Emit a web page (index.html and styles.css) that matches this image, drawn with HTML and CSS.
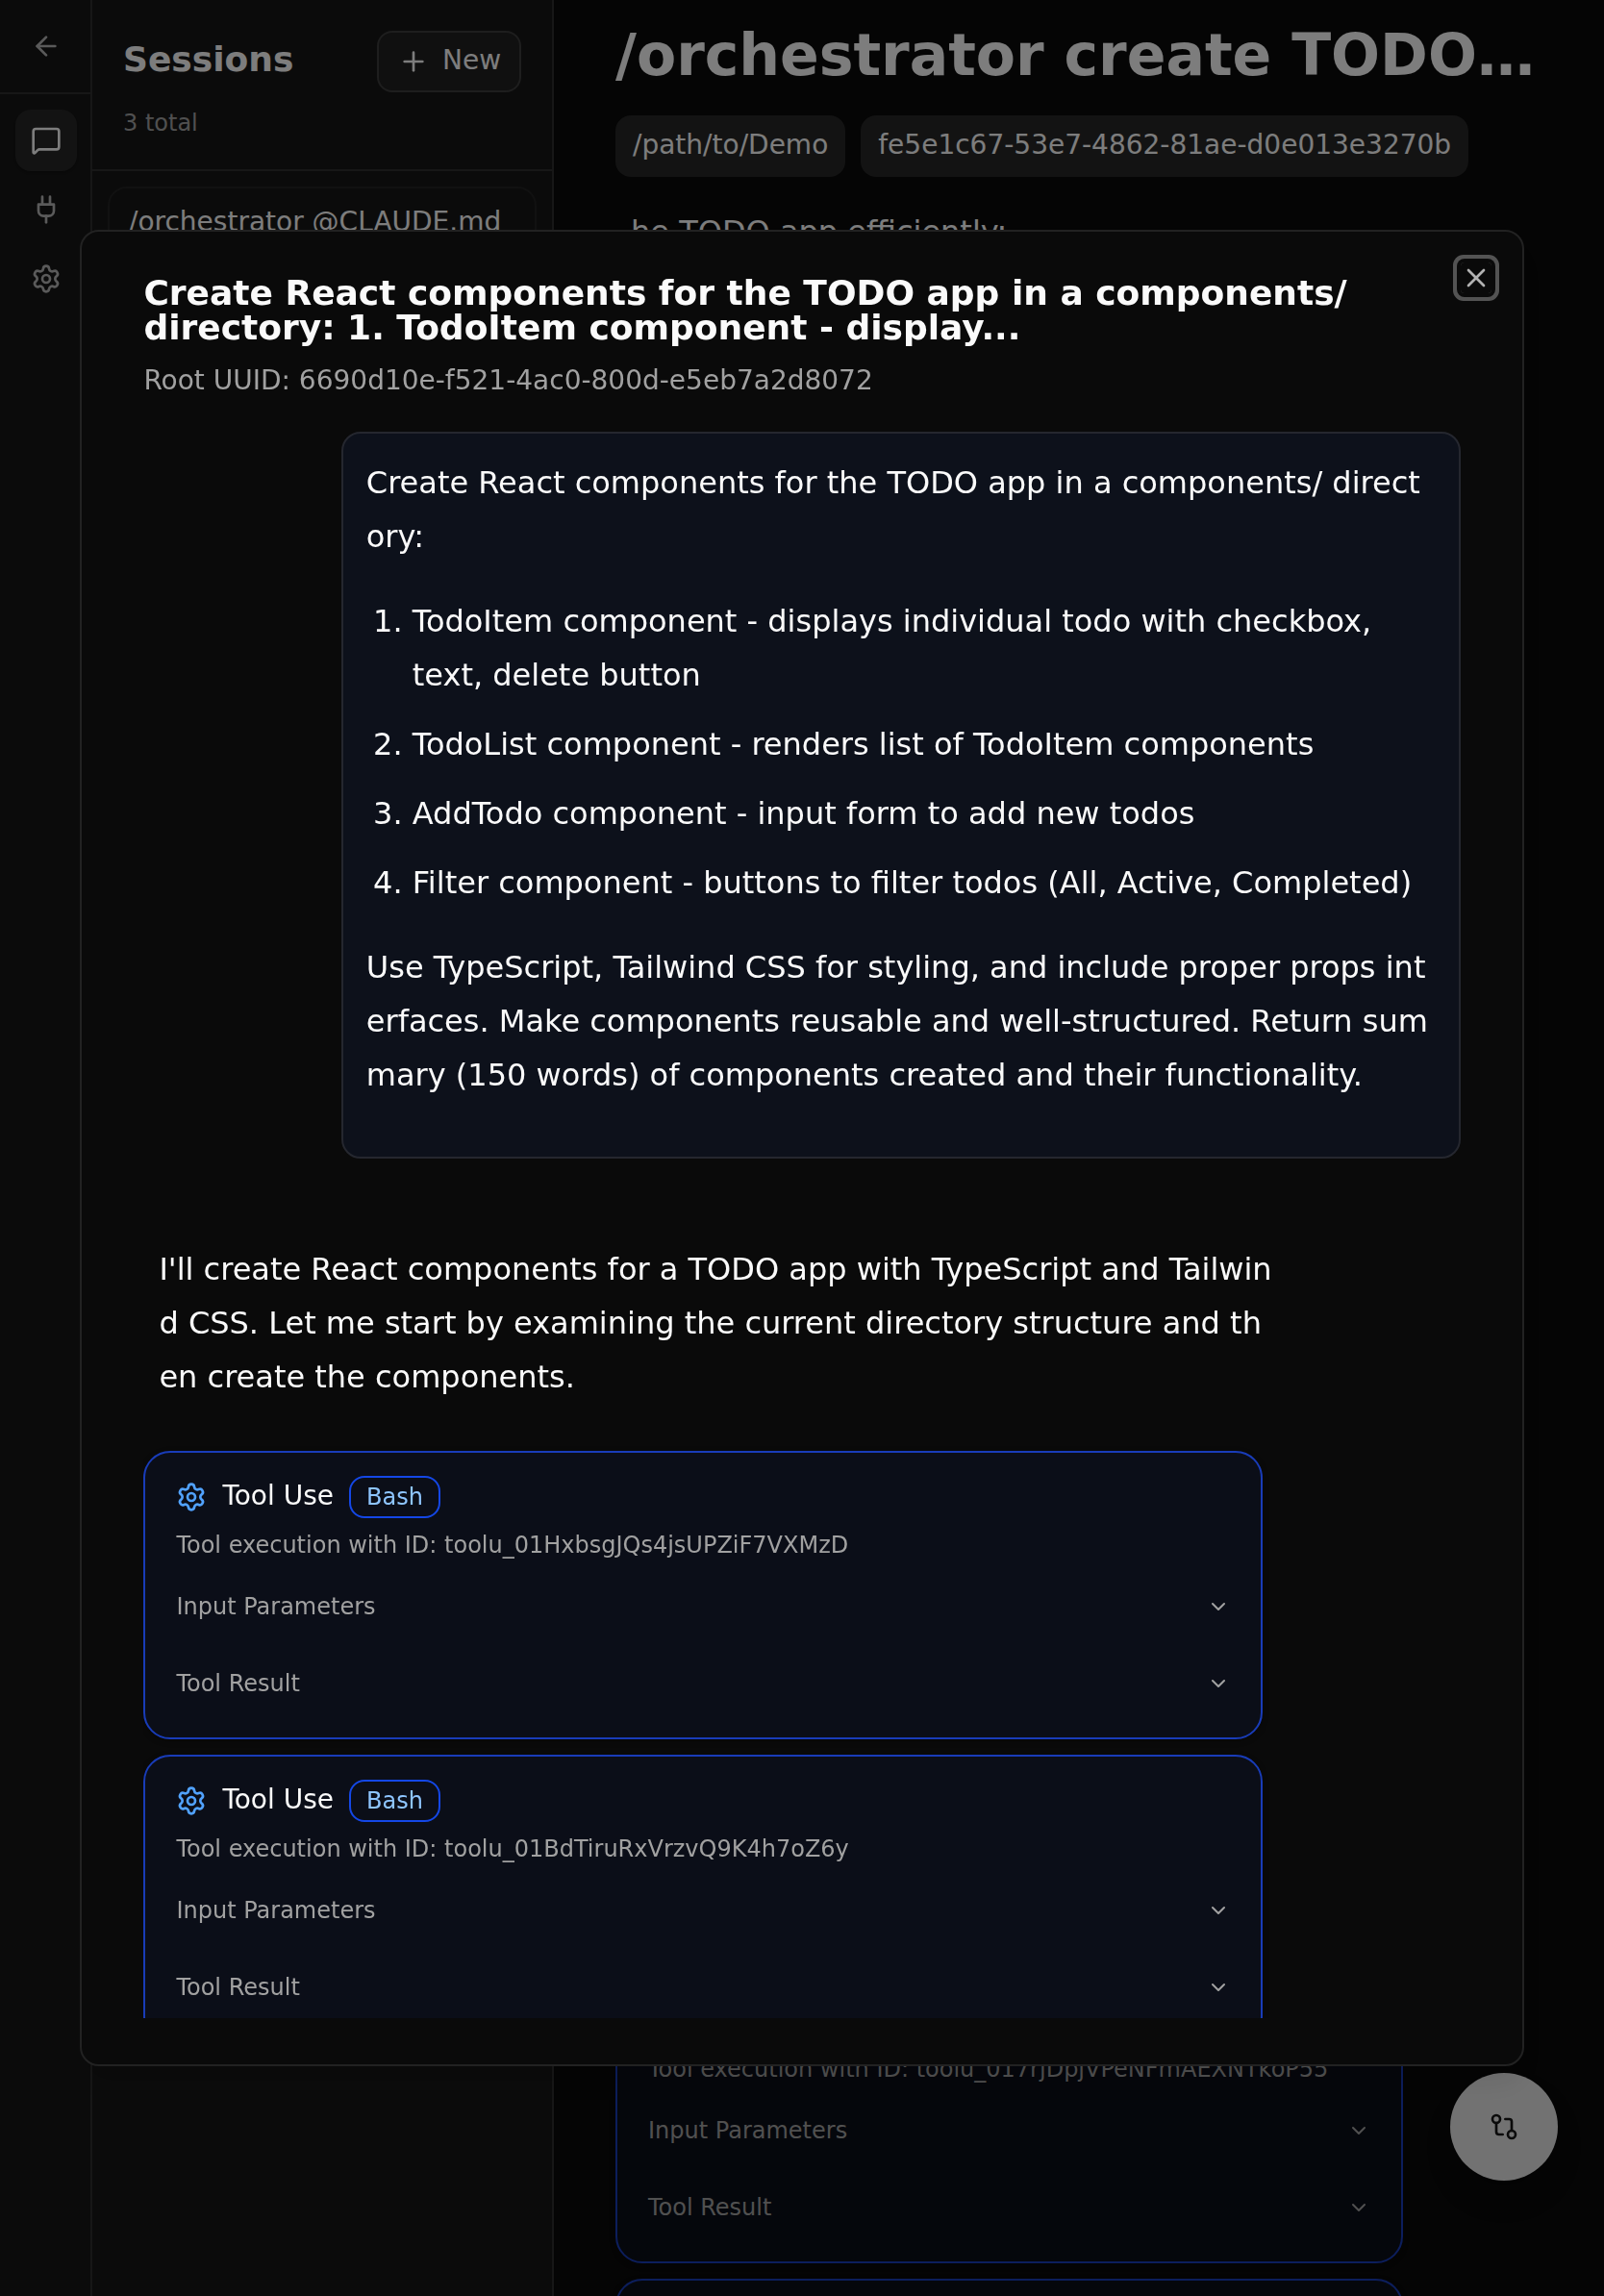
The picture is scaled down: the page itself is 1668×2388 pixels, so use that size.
FILE: index.html
```html
<!DOCTYPE html>
<html lang="en">
<head>
<meta charset="utf-8">
<title>Sessions</title>
<link rel="stylesheet" href="styles.css">
</head>
<body>
<svg class="sprite" aria-hidden="true">
  <symbol id="gear" viewBox="0 0 24 24"><path d="M9.671 4.136a2.34 2.34 0 0 1 4.659 0 2.34 2.34 0 0 0 3.319 1.915 2.34 2.34 0 0 1 2.33 4.033 2.34 2.34 0 0 0 0 3.831 2.34 2.34 0 0 1-2.33 4.033 2.34 2.34 0 0 0-3.319 1.915 2.34 2.34 0 0 1-4.659 0 2.34 2.34 0 0 0-3.32-1.915 2.34 2.34 0 0 1-2.33-4.033 2.34 2.34 0 0 0 0-3.831A2.34 2.34 0 0 1 6.35 6.051a2.34 2.34 0 0 0 3.319-1.915"/><circle cx="12" cy="12" r="3"/></symbol>
  <symbol id="chevron" viewBox="0 0 24 24"><path d="m6 9 6 6 6-6"/></symbol>
</svg>

<div class="app">
  <nav class="rail">
    <div class="rail-top"><svg class="icon" viewBox="0 0 24 24"><path d="m12 19-7-7 7-7"/><path d="M19 12H5"/></svg></div>
    <div class="rail-items">
      <button class="rail-button active"><svg class="icon" viewBox="0 0 24 24"><path d="M22 17a2 2 0 0 1-2 2H6.828a2 2 0 0 0-1.414.586l-2.202 2.202A.71.71 0 0 1 2 21.286V5a2 2 0 0 1 2-2h16a2 2 0 0 1 2 2z"/></svg></button>
      <button class="rail-button"><svg class="icon" viewBox="0 0 24 24"><path d="M12 22v-5"/><path d="M9 8V2"/><path d="M15 8V2"/><path d="M18 8v5a4 4 0 0 1-4 4h-4a4 4 0 0 1-4-4V8Z"/></svg></button>
      <button class="rail-button"><svg class="icon"><use href="#gear"/></svg></button>
    </div>
  </nav>

  <aside class="sessions">
    <header class="sessions-header">
      <div class="sessions-row">
        <h2 class="sessions-title">Sessions</h2>
        <button class="new-button"><svg class="icon" viewBox="0 0 24 24"><path d="M5 12h14"/><path d="M12 5v14"/></svg><span class="new-label">New</span></button>
      </div>
      <p class="sessions-count">3 total</p>
    </header>
    <div class="sessions-list">
      <div class="session-card">/orchestrator @CLAUDE.md</div>
    </div>
  </aside>

  <main class="main">
    <h1 class="page-title">/orchestrator create TODO…</h1>
    <div class="badges">
      <span class="badge">/path/to/Demo</span>
      <span class="badge">fe5e1c67-53e7-4862-81ae-d0e013e3270b</span>
    </div>
    <div class="conversation">
      <p class="reply-tail">he TODO app efficiently:</p>
      <div class="behind-cards">
        <section class="tool">
          <div class="tool-head"><svg class="icon tool-icon"><use href="#gear"/></svg><span class="tool-name">Tool Use</span><span class="tool-badge">Bash</span></div>
          <p class="tool-id">Tool execution with ID: toolu_017rjDpjVPeNFmAEXNTkoP55</p>
          <div class="tool-row">Input Parameters<svg class="icon small"><use href="#chevron"/></svg></div>
          <div class="tool-row">Tool Result<svg class="icon small"><use href="#chevron"/></svg></div>
        </section>
        <section class="tool"></section>
      </div>
    </div>
  </main>
</div>

<button class="fab"><svg class="icon" viewBox="0 0 24 24"><circle cx="18" cy="18" r="3"/><circle cx="6" cy="6" r="3"/><path d="M13 6h3a2 2 0 0 1 2 2v7"/><path d="M11 18H8a2 2 0 0 1-2-2V9"/></svg></button>

<div class="overlay"></div>

<div class="dialog" role="dialog">
  <button class="close"><svg class="icon" viewBox="0 0 24 24"><path d="M18 6 6 18"/><path d="m6 6 12 12"/></svg></button>
  <header class="dialog-header">
    <h2 class="dialog-title">Create React components for the TODO app in a components/<br>directory: 1. TodoItem component - display...</h2>
    <p class="dialog-sub">Root UUID: 6690d10e-f521-4ac0-800d-e5eb7a2d8072</p>
  </header>
  <div class="thread">
    <div class="bubble">
      <p>Create React components for the TODO app in a components/ directory:</p>
      <ol>
        <li>TodoItem component - displays individual todo with checkbox, text, delete button</li>
        <li>TodoList component - renders list of TodoItem components</li>
        <li>AddTodo component - input form to add new todos</li>
        <li>Filter component - buttons to filter todos (All, Active, Completed)</li>
      </ol>
      <p>Use TypeScript, Tailwind CSS for styling, and include proper props interfaces. Make components reusable and well-structured. Return summary (150 words) of components created and their functionality.</p>
    </div>
    <p class="reply">I'll create React components for a TODO app with TypeScript and Tailwind CSS. Let me start by examining the current directory structure and then create the components.</p>
    <section class="tool">
      <div class="tool-head"><svg class="icon tool-icon"><use href="#gear"/></svg><span class="tool-name">Tool Use</span><span class="tool-badge">Bash</span></div>
      <p class="tool-id">Tool execution with ID: toolu_01HxbsgJQs4jsUPZiF7VXMzD</p>
      <div class="tool-row">Input Parameters<svg class="icon small"><use href="#chevron"/></svg></div>
      <div class="tool-row">Tool Result<svg class="icon small"><use href="#chevron"/></svg></div>
    </section>
    <section class="tool">
      <div class="tool-head"><svg class="icon tool-icon"><use href="#gear"/></svg><span class="tool-name">Tool Use</span><span class="tool-badge">Bash</span></div>
      <p class="tool-id">Tool execution with ID: toolu_01BdTiruRxVrzvQ9K4h7oZ6y</p>
      <div class="tool-row">Input Parameters<svg class="icon small"><use href="#chevron"/></svg></div>
      <div class="tool-row">Tool Result<svg class="icon small"><use href="#chevron"/></svg></div>
    </section>
  </div>
</div>
</body>
</html>
```
FILE: styles.css
```css
* { box-sizing: border-box; margin: 0; padding: 0; }

body {
  height: 2388px;
  overflow: hidden;
  background: #0a0a0a;
  color: #fafafa;
  font-family: "DejaVu Sans", sans-serif;
  font-size: 32px;
}

button { font: inherit; color: inherit; background: none; border: 0; }

.sprite { display: none; }

.icon {
  width: 32px;
  height: 32px;
  flex: none;
  fill: none;
  stroke: currentColor;
  stroke-width: 2;
  stroke-linecap: round;
  stroke-linejoin: round;
}
.icon.small { width: 24px; height: 24px; }

.app { display: flex; height: 2388px; overflow: hidden; }

/* Icon rail */
.rail {
  flex: none;
  width: 96px;
  background: #171717;
  border-right: 2px solid #2e2e2e;
  color: #b5b5b5;
}
.rail-top {
  height: 98px;
  display: flex;
  align-items: center;
  justify-content: center;
  padding-left: 2px;
  border-bottom: 2px solid #2e2e2e;
}
.rail-items {
  display: flex;
  flex-direction: column;
  align-items: center;
  gap: 8px;
  padding: 16px 0 0 2px;
}
.rail-button {
  width: 64px;
  height: 64px;
  display: flex;
  align-items: center;
  justify-content: center;
  border-radius: 16px;
}
.rail-button.active { background: #262626; color: #fafafa; box-shadow: 0 2px 4px rgba(0, 0, 0, .3); }

/* Session list */
.sessions {
  flex: none;
  width: 480px;
  background: #171717;
  border-right: 2px solid #2e2e2e;
}
.sessions-header { height: 178px; padding: 32px; border-bottom: 2px solid #2e2e2e; }
.sessions-row { display: flex; justify-content: space-between; align-items: center; height: 64px; }
.sessions-title { font-size: 36px; font-weight: 700; line-height: 56px; padding-bottom: 4px; }
.new-button {
  width: 150px;
  height: 64px;
  display: flex;
  align-items: center;
  gap: 14px;
  padding: 0 20px;
  border: 2px solid #3c3c3c;
  border-radius: 16px;
  background: #202020;
  font-size: 28px;
}
.new-label { padding-bottom: 3px; }
.sessions-count { margin-top: 16px; font-size: 24px; line-height: 32px; color: #a1a1a1; }
.sessions-list { padding: 16px; }
.session-card {
  height: 200px;
  padding: 15px 20px;
  border: 2px solid #222;
  border-radius: 20px;
  font-size: 28px;
  line-height: 40px;
}

/* Main column */
.main { flex: 1; min-width: 0; padding: 21px 64px 0; }
.page-title { font-size: 60px; line-height: 72px; font-weight: 700; white-space: nowrap; }
.badges { display: flex; gap: 16px; margin-top: 27px; }
.badge {
  height: 64px;
  padding: 0 18px;
  border-radius: 16px;
  background: #262626;
  font-size: 28px;
  line-height: 62px;
}
.conversation { padding-top: 29px; }
.reply-tail { padding-left: 16px; line-height: 56px; }
.behind-cards {
  display: flex;
  flex-direction: column;
  gap: 16px;
  width: 85%;
  margin-top: 1785px;
}

/* Floating action button */
.fab {
  position: fixed;
  right: 48px;
  bottom: 120px;
  width: 112px;
  height: 112px;
  display: flex;
  align-items: center;
  justify-content: center;
  border-radius: 50%;
  background: #e5e5e5;
  color: #171717;
  box-shadow: 0 20px 30px -6px rgba(0, 0, 0, .3);
}

.overlay { position: fixed; inset: 0; background: rgba(0, 0, 0, .5); }

/* Dialog */
.dialog {
  position: fixed;
  left: 5vw;
  top: 10vh;
  width: 90vw;
  height: 80vh;
  display: flex;
  flex-direction: column;
  padding: 46px 64px 48px;
  border: 2px solid #222;
  border-radius: 20px;
  background: #0a0a0a;
  box-shadow: 0 20px 30px -6px rgba(0, 0, 0, .1);
}
.close {
  position: absolute;
  top: 32px;
  right: 32px;
  width: 32px;
  height: 32px;
  border-radius: 4px;
  opacity: .7;
  box-shadow: 0 0 0 4px #0a0a0a, 0 0 0 8px #737373;
}
.close .icon { display: block; }
.dialog-header { display: flex; flex-direction: column; gap: 17px; }
.dialog-title { font-size: 36px; line-height: 36px; font-weight: 700; white-space: nowrap; }
.dialog-sub { font-size: 28px; line-height: 40px; color: #a1a1a1; }

.thread {
  flex: 1;
  min-height: 0;
  overflow: hidden;
  display: flex;
  flex-direction: column;
  gap: 16px;
  margin-top: 33px;
}
.thread > * { flex: none; width: 85%; }
.bubble {
  align-self: flex-end;
  height: 756px;
  padding: 23px 24px;
  border: 2px solid #25272f;
  border-radius: 20px;
  background: #0d111b;
  line-height: 56px;
}
.bubble p { word-break: break-all; }
.bubble ol { margin: 32px 0; padding-left: 48px; }
.bubble li + li { margin-top: 16px; }
.reply {
  margin: 71px 0 33px 16px;
  line-height: 56px;
  word-break: break-all;
}

/* Tool call card */
.tool {
  flex: none;
  height: 300px;
  padding: 24px 32px;
  border: 2px solid #193cb8;
  border-radius: 28px;
  background: #0b0e18;
  box-shadow: 0 2px 6px rgba(0, 0, 0, .3);
  color: #a1a1a1;
  font-size: 24px;
}
.tool-head { display: flex; align-items: center; height: 44px; }
.tool-icon { color: #51a2ff; }
.tool-name { margin-left: 16px; font-size: 28px; line-height: 40px; padding-bottom: 2px; color: #fafafa; }
.tool-badge {
  margin-left: 16px;
  height: 44px;
  padding: 0 16px;
  border: 2px solid #1447e6;
  border-radius: 16px;
  color: #8ec5ff;
  line-height: 40px;
}
.tool-id { margin-top: 12px; line-height: 32px; }
.tool-row { display: flex; align-items: center; justify-content: space-between; height: 64px; margin-top: 16px; }
```
